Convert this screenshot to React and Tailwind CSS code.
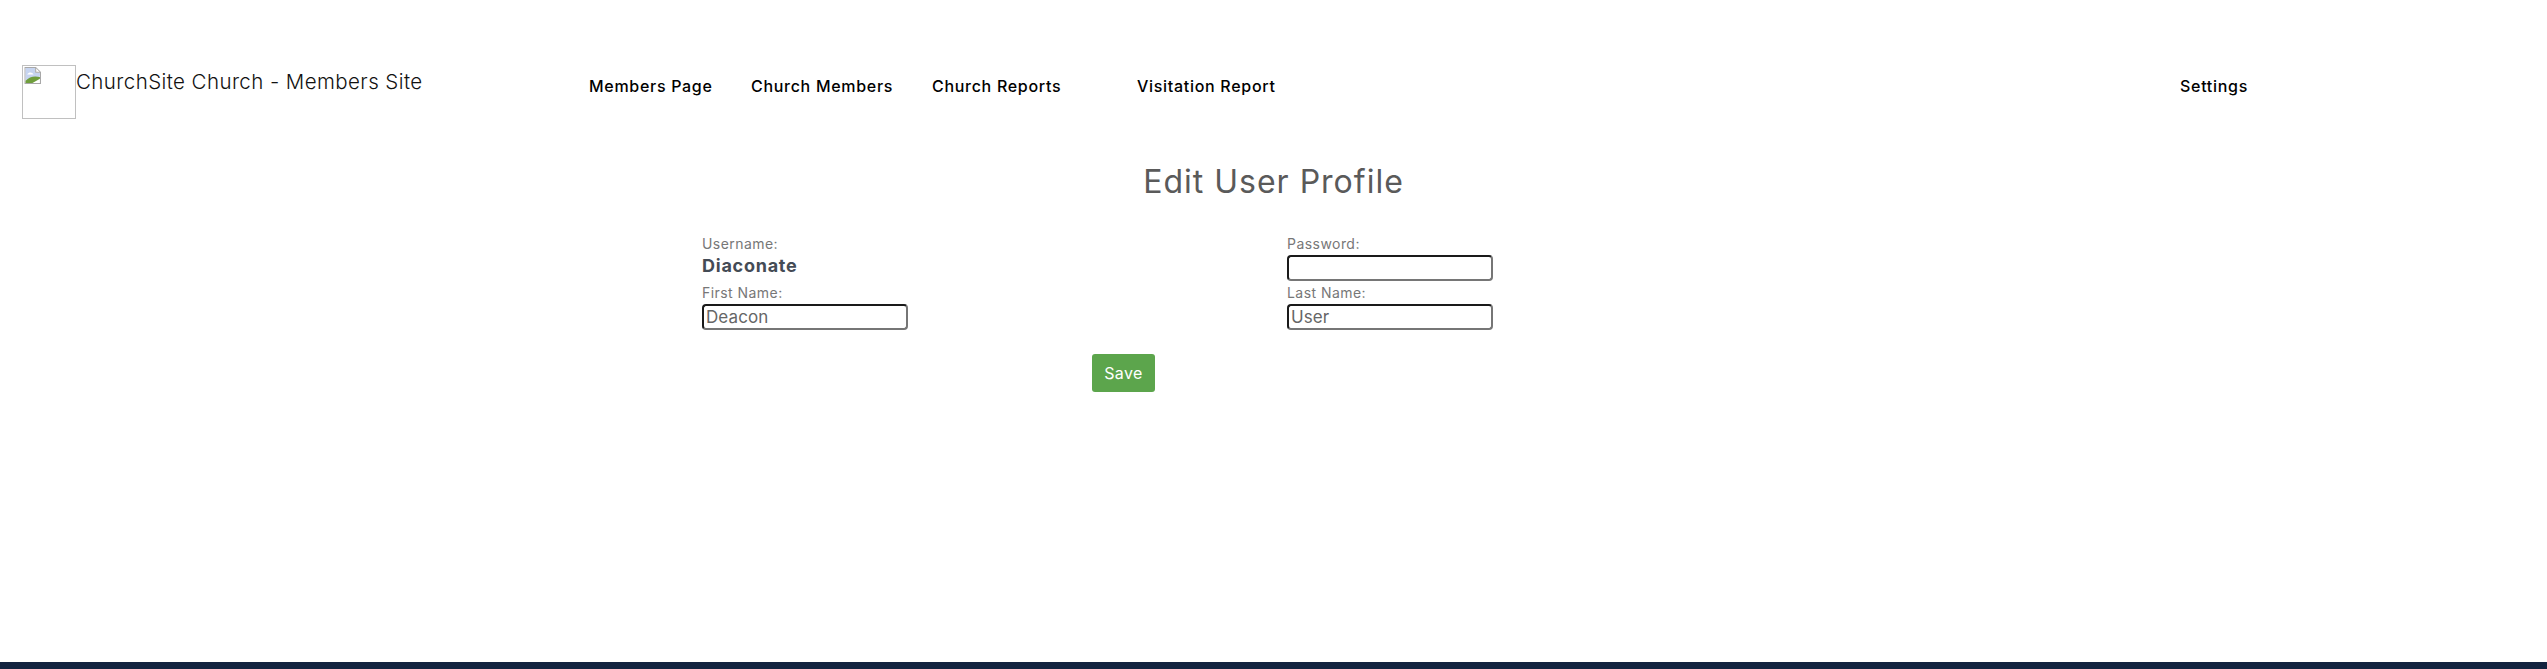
import React from 'react';

const navLinks = [
    { label: 'Members Page', className: 'ml-0 w-[124px]' },
    { label: 'Church Members', className: 'ml-[38px] w-[142px]' },
    { label: 'Church Reports', className: 'ml-[39px] w-[129px]' },
    { label: 'Visitation Report', className: 'ml-[76px] w-[139px]' },
];

const inputClass =
    'block w-[206px] h-[26px] rounded-[4px] border-2 border-t-[#1a1a1a] border-l-[#1a1a1a] border-b-[#767676] border-r-[#767676] bg-white px-[2px] text-[17px] leading-none text-[#666] outline-none tracking-[0.1px]';

const labelClass = 'block h-[21px] text-[14px] leading-[20px] text-[#777] tracking-[0.45px]';

const BrokenImage = () => (
    <div className="w-[54px] h-[54px] border border-[#c0c0c0] shrink-0">
        <svg width="17" height="17" viewBox="0 0 16 16" className="mt-[1px] ml-[1px]">
            <path d="M1 0.5H11L15.5 5V15.5H1Z" fill="#fff" stroke="#a8a8a8" />
            <path d="M1.5 1H10.5V5.5H15V9L1.5 13Z" fill="#c6d4f0" />
            <path d="M3 7C5 4 8 5 9 7Z" fill="#fff" />
            <path d="M1.5 15V13C5 9 10 8 15 9.5V11L8 15Z" fill="#6f9e3c" />
            <path d="M11 1V5H15" fill="#fff" stroke="#a8a8a8" />
        </svg>
    </div>
);

const App = () => {
    return (
        <div className="flex flex-col h-screen bg-white font-['Inter','Liberation_Sans',sans-serif]">
            <header className="flex items-start pt-[65px] pl-[22px]">
                <BrokenImage />
                <span className="w-[513px] text-[20.5px] leading-[29px] mt-[2px] text-[#111] font-light tracking-[0.42px]">
                    ChurchSite Church - Members Site
                </span>
                <nav className="flex pt-[10px] text-[16px] leading-[22px] font-medium text-black tracking-[0.7px]">
                    {navLinks.map((link) => (
                        <a key={link.label} className={`${link.className} whitespace-nowrap`} href="#">
                            {link.label}
                        </a>
                    ))}
                </nav>
                <a className="ml-[904px] pt-[10px] text-[16px] leading-[22px] font-medium text-black tracking-[0.7px]" href="#">
                    Settings
                </a>
            </header>

            <main className="flex-1">
                <h1 className="mt-[43px] text-center text-[32px] leading-[40px] font-normal text-[#5a5a5a] tracking-[1px]">
                    Edit User Profile
                </h1>
                <form className="mt-[32px] ml-[702px]">
                    <div className="grid grid-cols-[585px_206px]">
                        <div>
                            <label className={labelClass}>Username:</label>
                            <div className="h-[29px] -mt-[1px] text-[18px] leading-[24px] font-bold text-[#444b55] tracking-[0.75px]">Diaconate</div>
                        </div>
                        <div>
                            <label className={labelClass}>Password:</label>
                            <input className={inputClass} type="password" />
                        </div>
                        <div>
                            <label className={labelClass}>First Name:</label>
                            <input className={inputClass} type="text" defaultValue="Deacon" />
                        </div>
                        <div>
                            <label className={labelClass}>Last Name:</label>
                            <input className={inputClass} type="text" defaultValue="User" />
                        </div>
                    </div>
                    <button
                        className="block ml-[390px] mt-[24px] w-[63px] h-[38px] rounded-[3px] bg-[#5ca54c] text-[16px] text-white tracking-[0.4px]"
                        type="button"
                    >
                        Save
                    </button>
                </form>
            </main>

            <footer className="h-[7px] bg-[#12233f]"></footer>
        </div>
    );
};

export default App;
